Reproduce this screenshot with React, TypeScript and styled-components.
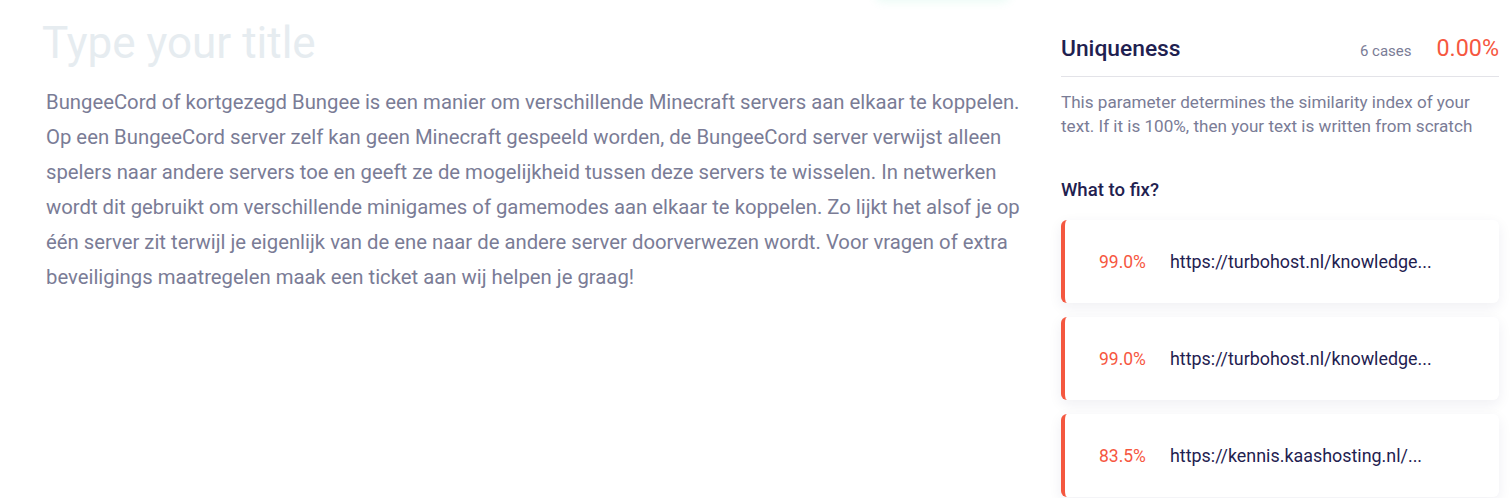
import React from 'react';
import styled, { createGlobalStyle } from 'styled-components';

interface Match {
  id: number;
  percent: string;
  url: string;
}

const matches: Match[] = [
  { id: 1, percent: '99.0%', url: 'https://turbohost.nl/knowledge...' },
  { id: 2, percent: '99.0%', url: 'https://turbohost.nl/knowledge...' },
  { id: 3, percent: '83.5%', url: 'https://kennis.kaashosting.nl/...' },
];

const GlobalStyle = createGlobalStyle`
  html, body {
    margin: 0;
    padding: 0;
    background: #ffffff;
    font-family: Roboto, "Liberation Sans", sans-serif;
    overflow: hidden;
  }
`;

const Page = styled.div`
  display: grid;
  grid-template-columns: 1fr 438px;
  column-gap: 35px;
  padding: 0 13px 0 42px;
  height: 498px;
  position: relative;
`;

// faint shadow of a control sitting just above the visible area
const Glow = styled.div`
  position: absolute;
  top: -60px;
  left: 875px;
  width: 135px;
  height: 60px;
  border-radius: 8px;
  box-shadow: 0 2px 10px rgba(80, 220, 170, 0.12);
`;

const Editor = styled.div`
  display: flex;
  flex-direction: column;
  padding-top: 14px;
`;

const Title = styled.h1`
  margin: 0;
  font-size: 44px;
  line-height: 58px;
  font-weight: 400;
  color: #e6ecf0;
`;

const Body = styled.p`
  margin: 13px 0 0 4px;
  font-size: 20.3px;
  line-height: 35px;
  color: #7a7c96;
`;

const Sidebar = styled.aside`
  display: flex;
  flex-direction: column;
  padding-top: 34px;
`;

const Header = styled.div`
  display: flex;
  align-items: baseline;
  height: 28px;
  line-height: 28px;
  padding-bottom: 14px;
  border-bottom: 1px solid #e3e3e8;
`;

const Heading = styled.h2`
  margin: 0;
  flex: 1;
  font-size: 22.8px;
  font-weight: 500;
  color: #1f2150;
`;

const Cases = styled.span`
  font-size: 15px;
  color: #7a7c96;
  margin-right: 25px;
`;

const Score = styled.span`
  font-size: 23.3px;
  color: #f6573f;
`;

const Description = styled.p`
  margin: 13px 0 0;
  font-size: 17.1px;
  line-height: 24px;
  color: #7a7c96;
`;

const SubHeading = styled.h3`
  margin: 41px 0 0;
  font-size: 18.6px;
  line-height: 22px;
  font-weight: 500;
  color: #1f2150;
`;

const List = styled.div`
  display: flex;
  flex-direction: column;
  gap: 14px;
  margin-top: 19px;
`;

const Card = styled.div`
  display: flex;
  align-items: center;
  height: 83px;
  padding-left: 34px;
  border-left: 4px solid #f4573f;
  border-radius: 6px;
  background: #ffffff;
  box-shadow: 0 4px 14px rgba(30, 33, 80, 0.07);
`;

const Percent = styled.span`
  width: 71px;
  font-size: 17.5px;
  color: #f6573f;
`;

const Url = styled.span`
  font-size: 17.9px;
  color: #1f2150;
`;

const App: React.FC = () => {
  return (
    <>
      <GlobalStyle />
      <Page>
        <Glow />
        <Editor>
          <Title>Type your title</Title>
          <Body>
            BungeeCord of kortgezegd Bungee is een manier om verschillende Minecraft servers aan elkaar te koppelen.
            Op een BungeeCord server zelf kan geen Minecraft gespeeld worden, de BungeeCord server verwijst alleen
            spelers naar andere servers toe en geeft ze de mogelijkheid tussen deze servers te wisselen. In netwerken
            wordt dit gebruikt om verschillende minigames of gamemodes aan elkaar te koppelen. Zo lijkt het alsof je op
            één server zit terwijl je eigenlijk van de ene naar de andere server doorverwezen wordt. Voor vragen of extra
            beveiligings maatregelen maak een ticket aan wij helpen je graag!
          </Body>
        </Editor>
        <Sidebar>
          <Header>
            <Heading>Uniqueness</Heading>
            <Cases>6 cases</Cases>
            <Score>0.00%</Score>
          </Header>
          <Description>
            This parameter determines the similarity index of your text. If it is 100%, then your text is written
            from scratch
          </Description>
          <SubHeading>What to fix?</SubHeading>
          <List>
            {matches.map(m => (
              <Card key={m.id}>
                <Percent>{m.percent}</Percent>
                <Url>{m.url}</Url>
              </Card>
            ))}
          </List>
        </Sidebar>
      </Page>
    </>
  );
};

export default App;
